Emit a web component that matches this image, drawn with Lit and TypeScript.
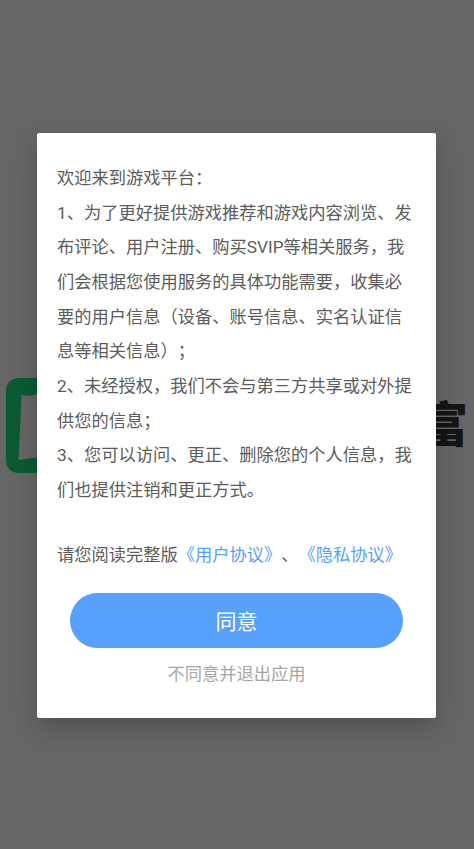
import { LitElement, html, css } from "lit";
import { customElement } from "lit/decorators.js";

@customElement("app-root")
export class AppRoot extends LitElement {
  static styles = css`
    :host {
      display: block;
      position: relative;
      width: 474px;
      height: 849px;
      overflow: hidden;
      background: #666;
      font-family: "Roboto", "Noto Sans CJK SC", sans-serif;
      text-spacing-trim: space-all;
    }
    .logo {
      position: absolute;
      left: 6px;
      top: 378px;
    }
    .brand {
      position: absolute;
      left: 420px;
      top: 396px;
      font-size: 48px;
      line-height: 60px;
      font-weight: 900;
      color: #151515;
      opacity: 0.99;
    }
    .wrap {
      position: relative;
      height: 100%;
      display: flex;
      align-items: flex-start;
      justify-content: flex-start;
      padding: 133px 0 0 37px;
      box-sizing: border-box;
    }
    .dialog {
      width: 399px;
      height: 585px;
      box-sizing: border-box;
      background: #fff;
      border-radius: 2px;
      padding: 28px 20px 0;
      box-shadow: 0 10px 26px rgba(0, 0, 0, 0.22);
    }
    .body {
      font-size: 17.25px;
      line-height: 34.67px;
      color: #5c5c5c;
    }
    .body p {
      margin: 0;
    }
    .body .notice {
      margin-top: 30px;
    }
    .link {
      color: #57a0fb;
    }
    .agree {
      display: block;
      width: 333px;
      height: 55px;
      margin: 20.5px auto 0;
      border: 0;
      padding: 0;
      border-radius: 28px;
      background: #57a0fb;
      color: #fff;
      font: inherit;
      font-size: 21px;
    }
    .decline {
      margin-top: 14px;
      text-align: center;
      font-size: 17.25px;
      line-height: 25px;
      color: #a6a6a6;
    }
  `;

  render() {
    return html`
      <svg class="logo" width="31" height="95" viewBox="0 0 31 95">
        <path
          d="M31 0H14Q0 0 0 14V81Q0 95 14 95H31V79.5L12.5 82L15.6 17Q24 19 31 16Z"
          fill="#0c5a33"
        />
      </svg>
      <div class="brand">富</div>
      <div class="wrap">
        <div class="dialog">
          <div class="body">
            <p>欢迎来到游戏平台：</p>
            <p>1、为了更好提供游戏推荐和游戏内容浏览、发布评论、用户注册、购买SVIP等相关服务，我们会根据您使用服务的具体功能需要，收集必要的用户信息（设备、账号信息、实名认证信息等相关信息）；</p>
            <p>2、未经授权，我们不会与第三方共享或对外提供您的信息；</p>
            <p>3、您可以访问、更正、删除您的个人信息，我们也提供注销和更正方式。</p>
            <p class="notice">请您阅读完整版<span class="link">《用户协议》</span>、<span class="link">《隐私协议》</span></p>
          </div>
          <button class="agree">同意</button>
          <div class="decline">不同意并退出应用</div>
        </div>
      </div>
    `;
  }
}
